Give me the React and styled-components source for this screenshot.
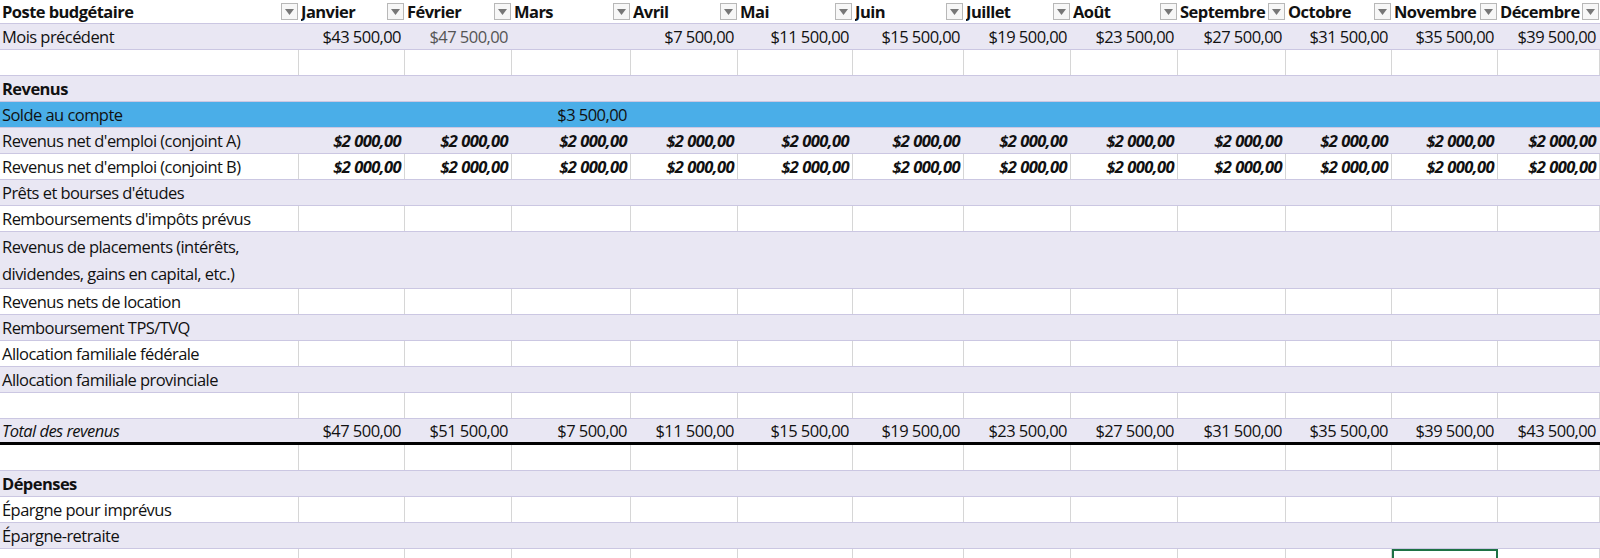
import styled, { createGlobalStyle } from "styled-components";

const Global = createGlobalStyle`
  body { margin: 0; background: #fff; font-family: "Open Sans", "Noto Sans", sans-serif; }
`;

const COLS = "299px 106px 107px 119px 107px 115px 111px 107px 107px 108px 106px 106px 102px";
const months = ["Janvier", "Février", "Mars", "Avril", "Mai", "Juin", "Juillet", "Août", "Septembre", "Octobre", "Novembre", "Décembre"];

const Sheet = styled.div`
  width: 1600px;
  height: 558px;
  overflow: hidden;
  font-size: 16.5px;
  letter-spacing: -0.55px;
  color: #111;
`;

const Row = styled.div`
  display: grid;
  grid-template-columns: ${COLS};
  height: ${(p) => p.h || 26}px;
  background: ${(p) => (p.tone === "band" ? "#e9e7f3" : p.tone === "blue" ? "#4aaee8" : "#fff")};
  border-bottom: ${(p) => (p.thick ? "3px solid #000" : "1px solid #cbc7e2")};
  box-sizing: border-box;
  font-weight: ${(p) => (p.bold ? 700 : 400)};
`;

const Cell = styled.div`
  display: flex;
  align-items: ${(p) => (p.wrap ? "flex-start" : "center")};
  justify-content: ${(p) => (p.right ? "flex-end" : "flex-start")};
  padding: ${(p) => (p.wrap ? "1px 2px" : "0 3px 0 2px")};
  line-height: 27px;
  white-space: ${(p) => (p.wrap ? "normal" : "nowrap")};
  overflow: hidden;
  border-right: 1px solid ${(p) => (p.lines ? "#d6d6d6" : "transparent")};
  outline: ${(p) => (p.sel ? "2px solid #1e7145" : "none")};
  outline-offset: -2px;
  color: ${(p) => p.color || "inherit"};
  font-weight: ${(p) => (p.strong ? 700 : "inherit")};
  font-style: ${(p) => (p.em ? "italic" : "normal")};
`;

const Head = styled.div`
  display: flex;
  align-items: center;
  padding-left: 2px;
  font-weight: 700;
  overflow: hidden;
  white-space: nowrap;
`;

const HeadText = styled.span`
  flex: 1 1 auto;
  min-width: 0;
  overflow: hidden;
`;

const Drop = styled.span`
  flex: 0 0 auto;
  width: 17px;
  height: 17px;
  box-sizing: border-box;
  border: 1px solid #b8b8b8;
  background: #f7f7f7;
  display: flex;
  align-items: center;
  justify-content: center;
  margin-right: 1px;
`;

const Tri = () => (
  <Drop>
    <svg width="9" height="6" viewBox="0 0 9 6"><path d="M0 0h9L4.5 6z" fill="#777" /></svg>
  </Drop>
);

const money = (n) => {
  if (n == null) return "";
  const s = String(n).replace(/\B(?=(\d{3})+(?!\d))/g, " ");
  return "$" + s + ",00";
};

const DataRow = ({ label, values = [], tone, lines, bold, italic, valueStrong, thick, h, wrap, greyIdx, selIdx }) => (
  <Row tone={tone} bold={bold} thick={thick} h={h}>
    <Cell wrap={wrap} lines={lines} em={italic}>{label}</Cell>
    {months.map((m, i) => (
      <Cell key={m} right lines={lines} strong={valueStrong} em={valueStrong} color={greyIdx === i ? "#555" : undefined} sel={selIdx === i}>
        {money(values[i])}
      </Cell>
    ))}
  </Row>
);

const prev = [43500, 47500, null, 7500, 11500, 15500, 19500, 23500, 27500, 31500, 35500, 39500];
const total = [47500, 51500, 7500, 11500, 15500, 19500, 23500, 27500, 31500, 35500, 39500, 43500];
const two = Array(12).fill(2000);
const solde = [null, null, 3500];

export default function App() {
  return (
    <>
      <Global />
      <Sheet>
        <Row h={24}>
          <Head><HeadText>Poste budgétaire</HeadText><Tri /></Head>
          {months.map((m) => (
            <Head key={m}><HeadText>{m}</HeadText><Tri /></Head>
          ))}
        </Row>
        <DataRow label="Mois précédent" values={prev} tone="band" greyIdx={1} />
        <DataRow label="" lines />
        <DataRow label="Revenus" tone="band" bold />
        <DataRow label="Solde au compte" values={solde} tone="blue" />
        <DataRow label="Revenus net d'emploi (conjoint A)" values={two} tone="band" valueStrong />
        <DataRow label="Revenus net d'emploi (conjoint B)" values={two} lines valueStrong />
        <DataRow label="Prêts et bourses d'études" tone="band" />
        <DataRow label="Remboursements d'impôts prévus" lines />
        <DataRow label="Revenus de placements (intérêts, dividendes, gains en capital, etc.)" tone="band" h={57} wrap />
        <DataRow label="Revenus nets de location" lines />
        <DataRow label="Remboursement TPS/TVQ" tone="band" />
        <DataRow label="Allocation familiale fédérale" lines />
        <DataRow label="Allocation familiale provinciale" tone="band" />
        <DataRow label="" lines />
        <DataRow label="Total des revenus" values={total} tone="band" italic thick />
        <DataRow label="" lines />
        <DataRow label="Dépenses" tone="band" bold />
        <DataRow label="Épargne pour imprévus" lines />
        <DataRow label="Épargne-retraite" tone="band" />
        <DataRow label="" lines selIdx={10} />
      </Sheet>
    </>
  );
}
